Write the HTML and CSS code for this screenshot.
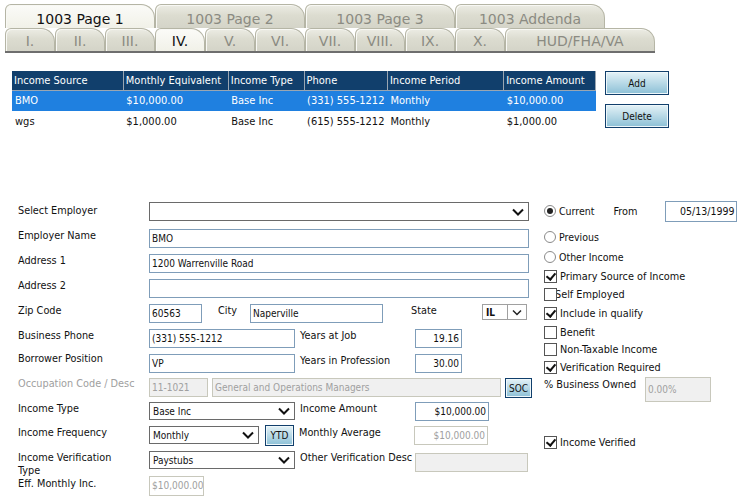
FILE: index.html
```html
<!DOCTYPE html>
<html>
<head>
<meta charset="utf-8">
<link rel="stylesheet" href="styles.css">
</head>
<body>
<div class="tabs">
  <div class="tabrow top">
    <div class="tab wide cur">1003 Page 1</div>
    <div class="tab wide">1003 Page 2</div>
    <div class="tab wide">1003 Page 3</div>
    <div class="tab wide">1003 Addenda</div>
  </div>
  <div class="tabrow sub">
    <div class="tab">I.</div>
    <div class="tab">II.</div>
    <div class="tab">III.</div>
    <div class="tab cur">IV.</div>
    <div class="tab">V.</div>
    <div class="tab">VI.</div>
    <div class="tab">VII.</div>
    <div class="tab">VIII.</div>
    <div class="tab">IX.</div>
    <div class="tab">X.</div>
    <div class="tab hud">HUD/FHA/VA</div>
  </div>
</div>

<div class="listarea">
  <table class="grid">
    <thead>
      <tr><th class="c1">Income Source</th><th class="c2">Monthly Equivalent</th><th class="c3">Income Type</th><th class="c4">Phone</th><th class="c5">Income Period</th><th class="c6">Income Amount</th></tr>
    </thead>
    <tbody>
      <tr class="active"><td>BMO</td><td>$10,000.00</td><td>Base Inc</td><td>(331) 555-1212</td><td>Monthly</td><td>$10,000.00</td></tr>
      <tr><td>wgs</td><td>$1,000.00</td><td>Base Inc</td><td>(615) 555-1212</td><td>Monthly</td><td>$1,000.00</td></tr>
    </tbody>
  </table>
  <div class="btncol">
    <button class="btn big">Add</button>
    <button class="btn big">Delete</button>
  </div>
</div>

<div class="form">
  <div class="left">
    <div class="row r1"><span class="lbl down2">Select Employer</span><div class="dropdown sel-emp"><span></span><svg class="chev" width="12" height="8" viewBox="0 0 12 8"><path d="M1 1.5l5 5 5-5" fill="none" stroke="#111" stroke-width="2"/></svg></div></div>
    <div class="row r2"><span class="lbl">Employer Name</span><div class="inp w380">BMO</div></div>
    <div class="row r3"><span class="lbl">Address 1</span><div class="inp w380">1200 Warrenville Road</div></div>
    <div class="row r3"><span class="lbl">Address 2</span><div class="inp w380"></div></div>
    <div class="row r3"><span class="lbl">Zip Code</span><div class="inp w53">60563</div><span class="lbl2 city">City</span><div class="inp w133">Naperville</div><span class="lbl2 state">State</span><div class="dropdown sel-state"><span>IL</span><span class="sbtn"><svg width="10" height="7" viewBox="0 0 10 7"><path d="M1 1.5l4 4 4-4" fill="none" stroke="#222" stroke-width="1.5"/></svg></span></div></div>
    <div class="row r3"><span class="lbl">Business Phone</span><div class="inp w146">(331) 555-1212</div><span class="lbl2 mid">Years at Job</span><div class="inp w47 num">19.16</div></div>
    <div class="row r4"><span class="lbl up2">Borrower Position</span><div class="inp w146">VP</div><span class="lbl2 mid">Years in Profession</span><div class="inp w47 num">30.00</div></div>
    <div class="row r5"><span class="lbl dis up1">Occupation Code / Desc</span><div class="inp dis w59">11-1021</div><div class="inp dis w289">General and Operations Managers</div><button class="btn soc">SOC</button></div>
    <div class="row r5"><span class="lbl">Income Type</span><div class="dropdown w146 dd"><span>Base Inc</span><svg class="chev" width="12" height="8" viewBox="0 0 12 8"><path d="M1 1.5l5 5 5-5" fill="none" stroke="#111" stroke-width="2"/></svg></div><span class="lbl2 mid">Income Amount</span><div class="inp w74 num">$10,000.00</div></div>
    <div class="row r3"><span class="lbl">Income Frequency</span><div class="dropdown w110 dd"><span>Monthly</span><svg class="chev" width="12" height="8" viewBox="0 0 12 8"><path d="M1 1.5l5 5 5-5" fill="none" stroke="#111" stroke-width="2"/></svg></div><button class="btn ytd">YTD</button><span class="lbl2 mid">Monthly Average</span><div class="inp dis w74 num white">$10,000.00</div></div>
    <div class="row r3"><span class="lbl two">Income Verification<br>Type</span><div class="dropdown w146 dd"><span>Paystubs</span><svg class="chev" width="12" height="8" viewBox="0 0 12 8"><path d="M1 1.5l5 5 5-5" fill="none" stroke="#111" stroke-width="2"/></svg></div><span class="lbl2 mid">Other Verification Desc</span><div class="inp dis w113 tall"></div></div>
    <div class="row r6"><span class="lbl down1">Eff. Monthly Inc.</span><div class="inp dis w55 tall20 white">$10,000.00</div></div>
  </div>
  <div class="right">
    <div class="opt o1"><span class="radio on"></span><span class="otext">Current</span><span class="from">From</span><div class="inp date">05/13/1999</div></div>
    <div class="opt o2"><span class="radio"></span><span class="otext">Previous</span></div>
    <div class="opt o3"><span class="radio"></span><span class="otext">Other Income</span></div>
    <div class="opt o4"><span class="cb on"></span><span class="ctext">Primary Source of Income</span></div>
    <div class="opt o5"><span class="cb"></span><span class="ctext tight">Self Employed</span></div>
    <div class="opt o6"><span class="cb on"></span><span class="ctext">Include in qualify</span></div>
    <div class="opt o7"><span class="cb"></span><span class="ctext">Benefit</span></div>
    <div class="opt o8"><span class="cb"></span><span class="ctext">Non-Taxable Income</span></div>
    <div class="opt o9"><span class="cb on"></span><span class="ctext">Verification Required</span></div>
    <div class="opt o10"><span class="ptext">% Business Owned</span><div class="inp dis pct">0.00%</div></div>
    <div class="opt o11"><span class="cb on"></span><span class="ctext">Income Verified</span></div>
  </div>
</div>
</body>
</html>
```

FILE: styles.css
```css
* { box-sizing: border-box; }
body {
  margin: 0;
  width: 742px;
  height: 504px;
  overflow: hidden;
  background: #fff;
  font-family: "DejaVu Sans Condensed", "DejaVu Sans", sans-serif;
  font-size: 11px;
  color: #111;
}

/* Tabs */
.tabs {
  margin: 4px 0 0 5px;
  width: 650px;
  border-bottom: 2px solid #6e6e6e;
}
.tabrow { display: flex; }
.tabrow.top { height: 24px; }
.tabrow.sub { height: 23px; }
.tab {
  width: 50px;
  border: 1px solid #b5b5a5;
  border-bottom: none;
  border-radius: 6px 14px 0 0;
  background: linear-gradient(#ececE4 0%, #dcdcd0 45%, #d4d4c8 100%);
  box-shadow: inset 1px 1px 0 #f8f8f4;
  color: #8b8b82;
  font-family: "DejaVu Sans", sans-serif;
  font-size: 14px;
  line-height: 24px;
  text-align: center;
}
.tab.wide { width: 150px; font-size: 14px; line-height: 28px; }
.tab.hud { width: 150px; }
.tab.cur { background: linear-gradient(#fbfbf8, #f1f1e8); color: #111; }

/* List */
.listarea {
  display: flex;
  align-items: flex-start;
  margin: 18px 0 0 12px;
}
.grid {
  border-collapse: collapse;
  width: 584px;
  font-size: 11px;
}
.grid th {
  background: #113f6c;
  color: #fff;
  font-weight: normal;
  text-align: left;
  height: 19px;
  padding: 0 2px;
  border-right: 1px solid #9aa6b2;
  border-bottom: 1px solid #9aa6b2;
  white-space: nowrap;
}
.grid td { height: 21px; padding: 0 3px; white-space: nowrap; }
.grid tr.active td { background: #1f80e0; color: #fff; }
.c1 { width: 112px; } .c2 { width: 105px; } .c3 { width: 76px; }
.c4 { width: 82px; } .c5 { width: 117px; } .c6 { width: 92px; }

.btncol { display: flex; flex-direction: column; gap: 9px; margin-left: 9px; }
.btn {
  font-family: "DejaVu Sans Condensed", "DejaVu Sans", sans-serif;
  font-size: 10px;
  color: #111;
  border: 1px solid #113f6c;
  box-shadow: inset 0 0 0 1px #eef7fa;
  background: linear-gradient(#e4f2f7, #8cc0d6);
  padding: 0;
  cursor: default;
}
.btn.big { width: 64px; height: 24px; }

/* Form */
.form {
  display: flex;
  margin-top: 70px;
}
.left { width: 532px; padding-left: 18px; }
.row { display: flex; align-items: flex-start; height: 25px; }
.r1 { height: 27px; }
.r4 { height: 24px; }
.r5 { height: 24px; }
.lbl { width: 131px; flex: none; padding-top: 0; font-size: 10.8px; }
.lbl.down2 { padding-top: 2px; }
.lbl.down1 { padding-top: 1px; }
.lbl.up2 { margin-top: -2px; }
.lbl.up1 { margin-top: -1px; }
.lbl.dis { color: #a0a0a0; }
.lbl.two { line-height: 12.5px; padding-top: 1px; }
.lbl2 { font-size: 10.8px; flex: none; padding-top: 0; white-space: nowrap; }
.lbl2.city { margin-left: 16px; width: 32px; }
.lbl2.state { margin-left: 28px; width: 71px; }
.lbl2.mid { margin-left: 5px; width: 115px; }

.inp {
  height: 19px;
  border: 1px solid #7f9db9;
  background: #fff;
  font-size: 10px;
  line-height: 17px;
  padding: 0 2px;
  white-space: nowrap;
  overflow: hidden;
  flex: none;
}
.inp.num { text-align: right; }
.inp.dis { border-color: #c8c8bc; background: #f0f0f0; color: #a0a0a0; }
.inp.dis.white { background: #fff; }
.w380 { width: 380px; }
.w53 { width: 53px; }
.w133 { width: 133px; }
.w146 { width: 146px; }
.w47 { width: 47px; }
.w59 { width: 59px; }
.w289 { width: 289px; margin-left: 4px; }
.w74 { width: 74px; }
.w110 { width: 110px; }
.w113 { width: 113px; }
.w55 { width: 55px; }
.tall { height: 19px; margin-top: 2px; }
.tall20 { height: 20px; }

.dropdown {
  display: flex;
  align-items: center;
  justify-content: space-between;
  flex: none;
  height: 19px;
  border: 1px solid #6a6a6a;
  background: #fff;
  font-size: 10px;
  padding: 0 4px 0 3px;
}
.sel-emp { width: 380px; }
.dropdown.dd { height: 18px; }
.sel-state { width: 45px; height: 16px; padding: 0 0 0 3px; border-color: #a0a0a0; font-size: 10px; font-weight: bold; }
.sel-state .sbtn { width: 18px; height: 14px; border-left: 1px solid #a0a0a0; display: flex; align-items: center; justify-content: center; margin-right: 1px; }
.btn.soc { width: 33px; height: 20px; margin-left: 4px; font-size: 10px; }
.btn.ytd { width: 29px; height: 21px; margin: -1px 0 0 6px; font-size: 10px; }

.right { width: 210px; padding-left: 12px; margin-top: -2px; }
.opt { display: flex; align-items: center; font-size: 10.5px; }
.radio {
  width: 12px; height: 12px; border-radius: 50%;
  border: 1px solid #8a8a8a; background: #fff;
  display: inline-flex; align-items: center; justify-content: center;
  flex: none;
}
.radio.on::after { content: ""; width: 6px; height: 6px; border-radius: 50%; background: #222; }
.otext { margin-left: 3px; }
.from { margin-left: 19px; font-size: 10.8px; width: 52px; }
.inp.date { width: 72px; height: 21px; text-align: right; line-height: 19px; font-size: 10.5px; }
.cb {
  width: 13px; height: 13px; border: 1px solid #555; background: #fff; flex: none;
  position: relative;
}
.cb.on::after {
  content: ""; position: absolute; left: 3px; top: 0px; width: 4px; height: 7px;
  border: solid #111; border-width: 0 2px 2px 0; transform: rotate(40deg);
}
.ctext { margin-left: 3px; font-size: 10.8px; }
.ctext.tight { margin-left: -2px; }
.o1 { height: 22px; }
.o2 { height: 22px; margin-top: 4px; }
.o3 { height: 17px; }
.o4 { height: 20px; margin-top: 1px; }
.o5 { height: 17px; }
.o6 { height: 20px; }
.o7 { height: 18px; }
.o8 { height: 17px; }
.o9 { height: 19px; }
.o10 { height: 22px; align-items: flex-start; padding-top: 1px; }
.ptext { font-size: 10.8px; width: 101px; }
.inp.pct { width: 66px; height: 25px; margin-top: -1px; line-height: 23px; }
.o11 { margin-top: 33px; height: 20px; }
```
